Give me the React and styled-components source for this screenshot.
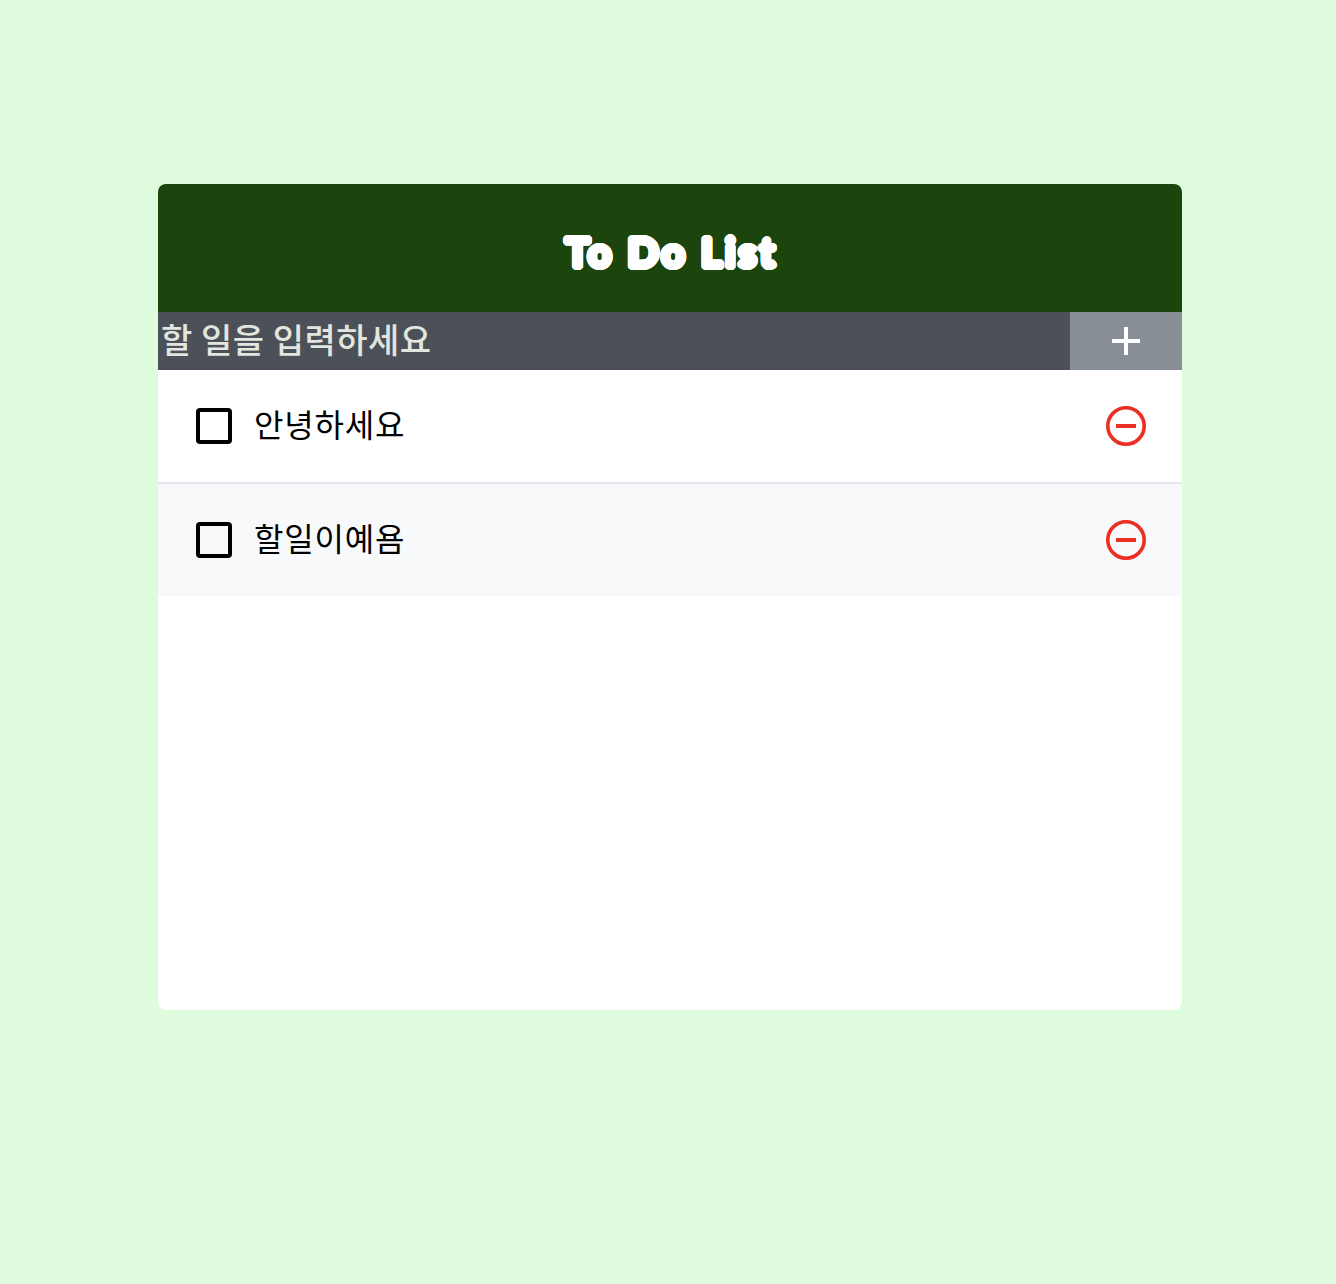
import React from "react";
import styled, { createGlobalStyle } from "styled-components";

const roundOutline = (r, n = 24) =>
  Array.from({ length: n }, (_, i) => {
    const a = (i / n) * Math.PI * 2;
    return `${(Math.cos(a) * r).toFixed(2)}px ${(Math.sin(a) * r).toFixed(2)}px 0 #fff`;
  }).join(", ");

const Global = createGlobalStyle`
  html, body { margin: 0; padding: 0; background: #dffbdd; }
  body { font-family: "Noto Sans CJK KR", "Liberation Sans", sans-serif; }
  * { box-sizing: border-box; }
`;
const Page = styled.div`
  min-height: 1284px;
  padding: 184px 154px 0 158px;
  background: #dffbdd;
`;
const Card = styled.main`
  width: 1024px;
  height: 826px;
  background: #fff;
  border-radius: 8px;
  overflow: hidden;
`;
const Header = styled.header`
  height: 128px;
  background: #1b450c;
  display: flex;
  align-items: center;
  justify-content: center;
  padding: 7px 0 0 3px;
`;
const Title = styled.h1`
  margin: 0;
  font-family: "Lato", "DejaVu Sans", sans-serif;
  font-weight: 700;
  font-size: 41px;
  line-height: 1;
  color: #fff;
  letter-spacing: 3px;
  text-shadow: ${roundOutline(2.6)};
`;
const InputBar = styled.form`
  display: flex;
  height: 58px;
`;
const TextInput = styled.input`
  flex: 1;
  min-width: 0;
  height: 100%;
  border: 0;
  outline: 0;
  padding: 0 4px 6px 3px;
  background: #4b5059;
  color: #e5e7eb;
  font: inherit;
  font-size: 34px;
  font-weight: 500;
  letter-spacing: 0.5px;
  &::placeholder { color: #e2e6de; opacity: 1; }
`;
const AddButton = styled.button`
  width: 112px;
  height: 100%;
  border: 0;
  padding: 0;
  background: #888e96;
  display: flex;
  align-items: center;
  justify-content: center;
`;
const List = styled.ul`
  list-style: none;
  margin: 0;
  padding: 0;
`;
const Row = styled.li`
  display: flex;
  align-items: center;
  height: ${(p) => (p.$even ? "112px" : "114px")};
  padding: 0 34px 0 38px;
  background: ${(p) => (p.$even ? "#f8f9fb" : "#fff")};
  border-bottom: ${(p) => (p.$even ? "0" : "2px solid #e3e5ea")};
`;
const Check = styled.input.attrs({ type: "checkbox" })`
  appearance: none;
  width: 36px;
  height: 36px;
  margin: 0;
  border: 4px solid #000;
  border-radius: 4px;
  background: transparent;
  flex: none;
`;
const Label = styled.span`
  flex: 1;
  margin-left: 22px;
  font-size: 32px;
  letter-spacing: 0.8px;
  color: #000;
  line-height: 1;
  position: relative;
  top: -3px;
`;
const RemoveButton = styled.button`
  border: 0;
  padding: 0;
  background: none;
  width: 44px;
  height: 44px;
  display: flex;
  align-items: center;
  justify-content: center;
`;

const PlusIcon = () => (
  <svg width="30" height="30" viewBox="0 0 30 30" aria-hidden="true">
    <path d="M15 1v28M1 15h28" stroke="#fff" strokeWidth="4" fill="none" />
  </svg>
);
const MinusCircle = () => (
  <svg width="44" height="44" viewBox="0 0 44 44" aria-hidden="true">
    <circle cx="22" cy="22" r="18.2" stroke="#ec2f23" strokeWidth="3.6" fill="none" />
    <path d="M12 22h20" stroke="#ec2f23" strokeWidth="4" fill="none" />
  </svg>
);

const items = ["안녕하세요", "할일이예욤"];

export default function App() {
  return (
    <>
      <Global />
      <Page>
        <Card>
          <Header>
            <Title>To Do List</Title>
          </Header>
          <InputBar onSubmit={(e) => e.preventDefault()}>
            <TextInput placeholder="할 일을 입력하세요" />
            <AddButton type="button" aria-label="추가"><PlusIcon /></AddButton>
          </InputBar>
          <List>
            {items.map((t, i) => (
              <Row key={t} $even={i % 2 === 1}>
                <Check />
                <Label>{t}</Label>
                <RemoveButton type="button" aria-label="삭제"><MinusCircle /></RemoveButton>
              </Row>
            ))}
          </List>
        </Card>
      </Page>
    </>
  );
}
